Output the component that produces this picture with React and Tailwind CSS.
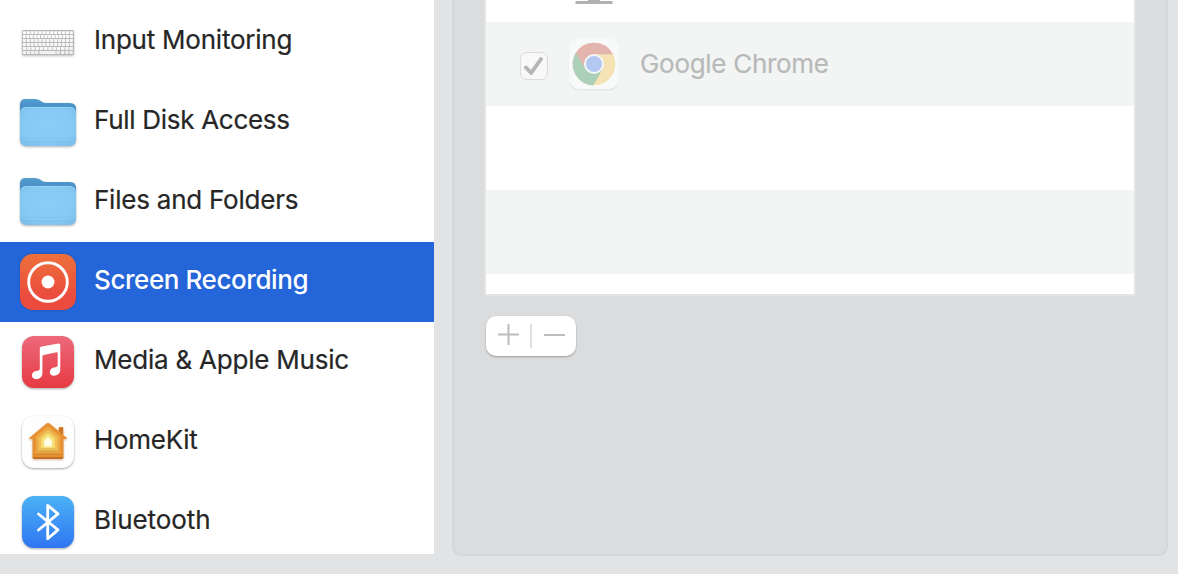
import React from "react";

const KEY_ROWS = [
  { y: 18.3, keys: 13 },
  { y: 22, keys: 14 },
  { y: 26, keys: 13 },
  { y: 30, keys: 13 },
  { y: 34, keys: 12 },
];

function KeyboardIcon() {
  return (
    <svg viewBox="0 0 56 56" className="size-14 overflow-visible drop-shadow-[0_1px_1px_rgba(0,0,0,0.25)]">
      <g transform="translate(0 -1)">
        <rect x="2" y="17" width="52" height="25" rx="1.200" fill="#b9b9b9" />
        {KEY_ROWS.map((row, r) => {
          const step = 50.8 / row.keys;
          return Array.from({ length: row.keys }, (_, i) => (
            <rect key={r + "-" + i} x={2.9 + i * step} y={row.y} width={step - 0.9} height={row.y < 20 ? 2.8 : 3.1} rx="0.2" fill={r < 2 ? "#ffffff" : "#f8f8f8"} />
          ));
        })}
        {[2.9, 6.9, 10.9, 14.9, 36.5, 41, 45.3, 49.6].map((x) => (
          <rect key={x} x={x} y="38" width="3.2" height="2.9" rx="0.2" fill="#f2f2f2" />
        ))}
        <rect x="19.4" y="38" width="16.2" height="2.9" rx="0.2" fill="#f2f2f2" />
      </g>
    </svg>
  );
}

function FolderIcon({ id, top }) {
  return (
    <svg viewBox="0 0 56 56" className="size-14 overflow-visible drop-shadow-[0_1px_1px_rgba(0,0,0,0.3)]">
      <defs>
        <linearGradient id={id + "-back"} x1="0" y1="0" x2="0" y2="1">
          <stop offset="0" stopColor="#559ed1" />
          <stop offset="0.9" stopColor="#3f87bf" />
        </linearGradient>
        <radialGradient id={id + "-front"} cx="0.5" cy="0.45" r="0.75">
          <stop offset="0" stopColor="#8bcdf7" />
          <stop offset="0.6" stopColor="#86c9f4" />
          <stop offset="1" stopColor="#78bbe7" />
        </radialGradient>
      </defs>
      <g transform={"translate(0 " + top + ")"}>
        <path d="M0 14V5.500Q0 0 5.500 0H14.500Q18 0 20.200 1.600L22 2.900Q23.600 4 26.500 4H50Q56 4 56 10V14Z" fill={"url(#" + id + "-back)"} />
        <path d="M0 14.500Q0 8 6.500 8H49.500Q56 8 56 14.500V40.500Q56 47 49.500 47H6.500Q0 47 0 40.500Z" fill={"url(#" + id + "-front)"} />
        <path d="M1 11.500Q2.500 8.400 6.500 8.400H49.500Q53.500 8.400 55 11.500" fill="none" stroke="#9bd8fb" strokeWidth="0.8" />
        <path d="M3 39.700H53M3 43.300H53" stroke="#78bce8" strokeWidth="0.6" />
        <path d="M3 40.400H53" stroke="#90cff6" strokeWidth="0.5" />
      </g>
    </svg>
  );
}

function ScreenRecordingIcon() {
  return (
    <svg viewBox="0 0 56 56" className="size-14 overflow-visible drop-shadow-[0_0_1px_rgba(0,0,0,0.2)]">
      <defs>
        <linearGradient id="rec" x1="0" y1="0" x2="0" y2="1">
          <stop offset="0" stopColor="#ee713b" />
          <stop offset="0.75" stopColor="#ea4c3d" />
          <stop offset="1" stopColor="#ea4b3c" />
        </linearGradient>
      </defs>
      <rect width="56" height="56" rx="12.500" fill="url(#rec)" />
      <circle cx="28" cy="28" r="19.300" fill="none" stroke="#fff" strokeWidth="2.900" />
      <circle cx="28" cy="28" r="6.500" fill="#fff" />
    </svg>
  );
}

function MusicIcon() {
  return (
    <svg viewBox="0 0 56 56" className="size-14 overflow-visible drop-shadow-[0_1px_1px_rgba(0,0,0,0.35)]">
      <defs>
        <linearGradient id="music" x1="0" y1="0" x2="0" y2="1">
          <stop offset="0" stopColor="#ec697b" />
          <stop offset="1" stopColor="#e73a42" />
        </linearGradient>
      </defs>
      <rect x="2" y="2" width="52" height="52" rx="12" fill="url(#music)" />
      <path d="M19.800 14.600Q19.800 13 21.500 12.600L38.500 9.400Q40.300 9.200 40.300 10.900V35.500C40.300 39.500 37.500 41.700 34 41.700C31.500 41.700 29.800 40.200 29.800 38C29.800 35.700 31.500 34 34 33.500L36 33.100Q37.700 32.800 37.700 31V19.200Q37.700 18 36.500 18.200L23.600 20.900Q22.400 21.200 22.400 22.400V39C22.400 43 19.700 45.200 16.300 45.200C13.600 45.200 11.900 43.700 11.900 41.600C11.900 39.300 13.600 37.600 16 37.100L18 36.700Q19.800 36.400 19.800 34.600Z" fill="#fff" />
    </svg>
  );
}

function HomeIcon() {
  return (
    <svg viewBox="0 0 56 56" className="size-14 overflow-visible drop-shadow-[0_1px_1px_rgba(0,0,0,0.35)]">
      <rect x="2" y="2" width="52" height="52" rx="12" fill="#fefefe" />
      <g className="drop-shadow-[0_1px_1px_rgba(160,80,20,0.4)]">
        <path d="M9.500 23.700L26.500 9.500Q28 8.300 29.500 9.500L38.700 17.100V14Q38.700 13 39.700 13H42.300Q43.300 13 43.300 14V21L46.600 23.700Q47.300 25 46 25.100H43.500V43Q43.500 44.800 41.700 44.800H14.300Q12.500 44.800 12.500 43V25.100H10Q8.800 25 9.500 23.700Z" fill="#e68f33" />
        <path d="M39.200 17.500V13.600H42.800V20.500" fill="#c97327" />
        <path d="M12.500 43.200H43.500Q43.400 44.800 41.700 44.800H14.300Q12.600 44.800 12.500 43.200Z" fill="#b7651e" />
      </g>
      <path d="M15.700 22.300L26.800 13.300Q28 12.400 29.200 13.300L40.300 22.300V40.300H15.700Z" fill="#eda844" />
      <path d="M15.700 39.500H40.300V40.500H15.700Z" fill="#c27e28" />
      <path d="M18.500 23.200L26.900 16.400Q28 15.600 29.100 16.400L37.500 23.200V37.400H18.500Z" fill="#f1c055" />
      <path d="M18.500 36.800H37.500V37.600H18.500Z" fill="#cd9233" />
      <path d="M21.200 24.200L27 19.600Q28 18.900 29 19.600L34.800 24.200V35H21.200Z" fill="#f7df78" />
      <path d="M21.200 34.400H34.800V35.200H21.200Z" fill="#d9ab46" />
      <path d="M24.300 26.300L27.200 23.800Q28 23.200 28.800 23.800L31.700 26.300V32.400H24.300Z" fill="#fffee6" stroke="#fbf3ad" strokeWidth="1.200" />
    </svg>
  );
}

function BluetoothIcon() {
  return (
    <svg viewBox="0 0 56 56" className="size-14 overflow-visible drop-shadow-[0_1px_1px_rgba(0,0,0,0.35)]">
      <defs>
        <linearGradient id="bt" x1="0" y1="0" x2="0" y2="1">
          <stop offset="0" stopColor="#4cb2f6" />
          <stop offset="1" stopColor="#2f76f3" />
        </linearGradient>
      </defs>
      <rect x="2" y="2" width="52" height="52" rx="12" fill="url(#bt)" />
      <path d="M18.500 20L38 35.900L27.700 44.700V11.300L38 19.800L18.500 36" fill="none" stroke="#fff" strokeWidth="2.800" strokeLinecap="round" strokeLinejoin="round" />
    </svg>
  );
}

const ITEMS = [
  { label: "Input Monitoring", icon: <KeyboardIcon />, text: "tracking-[-0.23px]" },
  { label: "Full Disk Access", icon: <FolderIcon id="disk" top={5} />, text: "tracking-[-0.29px]" },
  { label: "Files and Folders", icon: <FolderIcon id="files" top={4} />, text: "tracking-[-0.23px]" },
  { label: "Screen Recording", icon: <ScreenRecordingIcon />, text: "tracking-[-0.42px]", selected: true },
  { label: "Media & Apple Music", icon: <MusicIcon />, text: "tracking-[-0.22px]" },
  { label: "HomeKit", icon: <HomeIcon />, text: "tracking-[-0.3px]" },
  { label: "Bluetooth", icon: <BluetoothIcon />, text: "tracking-[-0.08px]" },
];

function Sidebar() {
  return (
    <nav className="flex h-[554px] w-[434px] shrink-0 flex-col overflow-hidden bg-white pt-0.5">
      {ITEMS.map((item) => (
        <div
          key={item.label}
          className={
            "flex h-20 shrink-0 items-center gap-[18px] pl-5 " +
            (item.selected ? "bg-[#2465d9] font-medium text-white" : "text-[#262626] [-webkit-text-stroke:0.2px_#262626]")
          }
        >
          {item.icon}
          <span className={"pb-1 text-[26px] leading-8 whitespace-nowrap " + item.text}>{item.label}</span>
        </div>
      ))}
    </nav>
  );
}

function ChromeIcon() {
  return (
    <svg viewBox="0 0 52 52" className="size-[52px] shrink-0 overflow-visible">
      <rect x="0.500" y="1.200" width="51" height="51.300" rx="11.500" fill="#e4e6e5" />
      <rect x="0.500" y="0.200" width="51" height="51" rx="11.500" fill="#f8f9f9" />
      <circle cx="26" cy="26" r="21.300" fill="#f5e3b4" />
      <path d="M26 26L7.550 15.350A21.300 21.300 0 0 1 44.900 16.200H26Z" fill="#e4b4af" />
      <path d="M7.900 14.800A21.300 21.300 0 0 0 25.500 47.300L34.500 31L26 26L17.500 31Z" fill="#accfb7" />
      <path d="M7.900 14.800L17.500 31L17 21.500L26 16.200L20 13Z" fill="#e4b4af" />
      <path d="M7.900 14.800L16.600 29.800L16 33H8Z" fill="#accfb7" />
      <circle cx="26" cy="26" r="10" fill="#f4f6f8" />
      <circle cx="26" cy="26" r="8" fill="#b3c8f1" />
    </svg>
  );
}

function AppTable() {
  return (
    <div className="flex h-[296px] w-[652px] flex-col overflow-hidden border-2 border-t-0 border-[#e3e4e4] bg-white">
      <div className="h-[22px] shrink-0 pl-[89px]">
        <svg viewBox="0 0 38 4" className="h-1 w-[38px]">
          <path d="M13 0H25V1H37.500V4H0.500V1H13Z" fill="#b1b1b1" />
        </svg>
      </div>
      <div className="flex h-[84px] shrink-0 items-center bg-[#f3f5f4] pl-[34px]">
        <div className="mt-1 flex size-7 shrink-0 items-center justify-center rounded-[7px] border-[1.5px] border-[#dadbdb] bg-[#f8f8f8]">
          <svg viewBox="0 0 20 20" className="size-5 shrink-0">
            <path d="M2 11.500L7.200 17L17 3" fill="none" stroke="#b5b5b5" strokeWidth="3.900" strokeLinecap="round" strokeLinejoin="round" />
          </svg>
        </div>
        <div className="ml-5">
          <ChromeIcon />
        </div>
        <span className="ml-5 text-[26px] leading-8 tracking-[-0.3px] whitespace-nowrap text-[#b8b9b9] [-webkit-text-stroke:0.2px_#b8b9b9]">Google Chrome</span>
      </div>
      <div className="h-[84px] shrink-0" />
      <div className="h-[84px] shrink-0 bg-[#f3f5f4]" />
    </div>
  );
}

function AddRemove() {
  return (
    <div className="mt-5 ml-0.5 flex h-10 w-[90px] items-center rounded-[10px] bg-white shadow-[0_1px_2px_rgba(0,0,0,0.3)]">
      <button className="flex h-full w-11 items-center justify-center" aria-label="Add">
        <svg viewBox="0 0 22 22" className="-mt-1 size-[22px]">
          <path d="M1 11.500H22M11.500 1V22" stroke="#bcbcbc" strokeWidth="2" />
        </svg>
      </button>
      <div className="h-6 w-0.5 bg-[#dfdfdf]" />
      <button className="flex h-full w-11 items-center justify-center" aria-label="Remove">
        <svg viewBox="0 0 22 22" className="-mt-0.5 size-[22px]">
          <path d="M1 11H22" stroke="#bcbcbc" strokeWidth="2" />
        </svg>
      </button>
    </div>
  );
}

export default function App() {
  return (
    <div className="flex h-[574px] w-[1178px] overflow-hidden bg-[#e2e3e5] font-['Inter','Liberation_Sans',sans-serif]">
      <Sidebar />
      <main className="ml-[18px] h-[556px] w-[716px] rounded-b-[9px] border-2 border-t-0 border-[#d5d6d8] bg-[#dbdcde] pl-[30px]">
        <AppTable />
        <AddRemove />
      </main>
    </div>
  );
}
